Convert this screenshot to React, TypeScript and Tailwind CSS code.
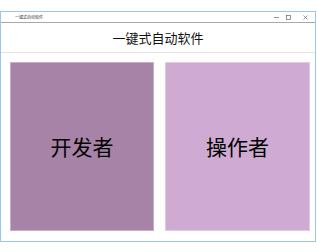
import React from 'react';

const cjk = { fontFamily: '"Noto Sans CJK SC", "Noto Sans", sans-serif' };

const TitleBar: React.FC = () => (
    <div className="flex items-center h-[11px] border-b border-[#a8a8a8] bg-white">
        <span className="ml-[14px] text-[4px] leading-none text-[#333]" style={cjk}>
            一键式自动软件
        </span>
        <div className="ml-auto flex items-center h-full">
            <svg width="5" height="5" viewBox="0 0 5 5" className="mr-[7px]">
                <line x1="0" y1="2.5" x2="5" y2="2.5" stroke="#666" strokeWidth="0.7" />
            </svg>
            <svg width="5" height="5" viewBox="0 0 5 5" className="mr-[12px]">
                <rect x="0.5" y="0.5" width="4" height="4" fill="none" stroke="#666" strokeWidth="0.7" />
            </svg>
            <svg width="5" height="5" viewBox="0 0 5 5" className="mr-[7px]">
                <path d="M0.5 0.5 L4.5 4.5 M4.5 0.5 L0.5 4.5" stroke="#666" strokeWidth="0.7" />
            </svg>
        </div>
    </div>
);

const RolePanel: React.FC<{ label: string; className: string }> = ({ label, className }) => (
    <div className={`flex items-center justify-center h-[169px] ${className}`}>
        <span className="text-[21px] leading-none text-black" style={cjk}>
            {label}
        </span>
    </div>
);

const App: React.FC = () => {
    return (
        <div className="w-[317px] h-[252px] bg-white pt-[11px] overflow-hidden">
            <div className="w-[316px] h-[231px] border border-[#9cc6ea] bg-white flex flex-col">
                <TitleBar />
                <div className="flex items-center justify-center h-[30px] border-b border-[#e3e3e3]">
                    <h1 className="text-[13px] leading-none text-[#111]" style={cjk}>
                        一键式自动软件
                    </h1>
                </div>
                <div className="flex pt-[9px] pl-[9px] gap-[11px]">
                    <RolePanel label="开发者" className="w-[144px] bg-[#a883a8] border border-[#c7aec7]" />
                    <RolePanel label="操作者" className="w-[145px] bg-[#cfabd3] border border-[#e0cbe2]" />
                </div>
            </div>
        </div>
    );
};

export default App;
